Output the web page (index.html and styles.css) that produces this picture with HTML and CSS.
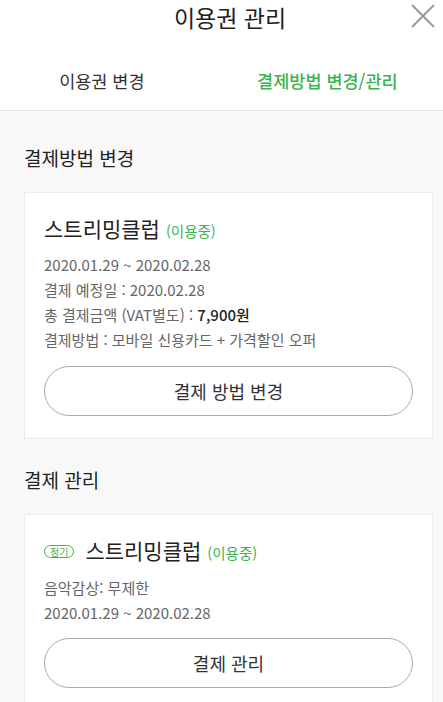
FILE: index.html
```html
<!DOCTYPE html>
<html lang="ko">
<head>
  <meta charset="UTF-8" />
  <meta name="viewport" content="width=device-width, initial-scale=1.0" />
  <title>이용권 관리</title>
  <link rel="stylesheet" href="styles.css">
</head>
<body>
  <div id="header">
    <h1>이용권 관리</h1>
    <button class="close" aria-label="닫기">
      <svg width="26" height="26" viewBox="0 0 26 26">
        <path d="M2 2 L24 24 M24 2 L2 24" stroke="#9a9a9a" stroke-width="2" fill="none" />
      </svg>
    </button>
  </div>

  <div id="tabs">
    <div class="tab">이용권 변경</div>
    <div class="tab on">결제방법 변경/관리</div>
  </div>

  <div id="content">
    <!-- 결제방법 변경 -->
    <h2>결제방법 변경</h2>
    <div class="card">
      <div class="cardTitle">스트리밍클럽 <span class="state">(이용중)</span></div>
      <ul class="info">
        <li>2020.01.29 ~ 2020.02.28</li>
        <li>결제 예정일 : 2020.02.28</li>
        <li>총 결제금액 (VAT별도) : <b>7,900원</b></li>
        <li>결제방법 : 모바일 신용카드 + 가격할인 오퍼</li>
      </ul>
      <button class="pill">결제 방법 변경</button>
    </div>

    <!-- 결제 관리 -->
    <h2>결제 관리</h2>
    <div class="card">
      <div class="cardTitle"><span class="badge">정기</span>스트리밍클럽 <span class="state">(이용중)</span></div>
      <ul class="info tight">
        <li>음악감상: 무제한</li>
        <li>2020.01.29 ~ 2020.02.28</li>
      </ul>
      <button class="pill">결제 관리</button>
    </div>
  </div>
</body>
</html>
```

FILE: styles.css
```css
* {
  box-sizing: border-box;
}
body {
  margin: 0;
  font-family: "Noto Sans CJK KR", "Noto Sans", sans-serif;
  color: #222;
  background: #f8f8f8;
}

/* 헤더 */
#header {
  position: relative;
  height: 36px;
  padding-left: 17px;
  background: #fff;
  text-align: center;
}
#header h1 {
  margin: 0;
  font-size: 23px;
  font-weight: 400;
  line-height: 34px;
}
#header .close {
  position: absolute;
  top: 3px;
  right: 7px;
  padding: 0;
  background: none;
  border: none;
}

/* 탭 */
#tabs {
  display: grid;
  grid-template-columns: 46% 54%;
  height: 75px;
  padding-top: 14px;
  background: #fff;
  border-bottom: 1px solid #e6e6e6;
}
.tab {
  display: flex;
  align-items: center;
  justify-content: center;
  font-size: 17.5px;
  color: #333;
}
.tab.on {
  padding-left: 8px;
  color: #3bb34f;
  font-weight: 500;
}

/* 본문 */
#content {
  padding: 34px 10px 0 24px;
}
h2 {
  margin: 0 0 21px;
  font-size: 19px;
  font-weight: 400;
  line-height: 26px;
  color: #222;
}
.card {
  background: #fff;
  border: 1px solid #ececec;
  padding: 21px 19px 22px;
  margin-bottom: 28px;
}
.cardTitle {
  display: flex;
  align-items: baseline;
  font-size: 21px;
  line-height: 28px;
  color: #222;
}
.state {
  margin-left: 6px;
  font-size: 14.5px;
  color: #3bb34f;
}
.badge {
  align-self: center;
  margin: 0 11px 0 0;
  padding: 0 5px;
  height: 13px;
  border: 1px solid #3bb34f;
  border-radius: 7px;
  font-size: 10px;
  line-height: 11px;
  color: #3bb34f;
}
.info {
  list-style: none;
  margin: 7px 0 14px;
  padding: 0;
  font-size: 15px;
  line-height: 25px;
  color: #666;
}
.info.tight {
  margin-top: 8px;
  margin-bottom: 13px;
}
.info b {
  font-weight: 500;
  color: #222;
}
.pill {
  display: block;
  width: 100%;
  height: 50px;
  background: #fff;
  border: 1px solid #aaa;
  border-radius: 25px;
  font-family: inherit;
  font-size: 18px;
  color: #333;
}
```
